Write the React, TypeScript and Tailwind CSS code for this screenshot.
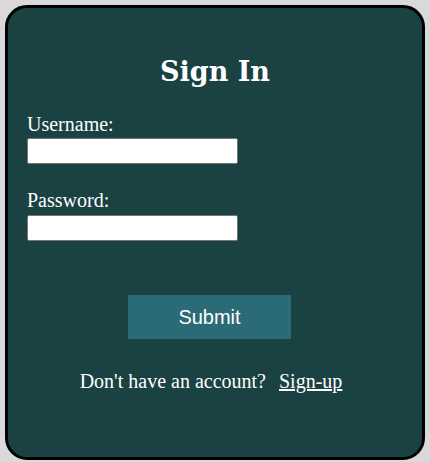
const App = () => {
  return (
    <div className="min-h-screen bg-[#d9d9d9] pt-[5px] px-[5px]">
      {/* Card */}
      <div className="h-[455px] w-[420px] rounded-[22px] border-[3px] border-black bg-[#1a4242] px-[19px] pt-[48px] text-white font-['Liberation_Serif',serif]">
        <h2 className="text-center text-[27px] leading-[32px] font-bold font-['DejaVu_Serif',serif]">
          Sign In
        </h2>

        <form className="mt-[25px] flex flex-col" onSubmit={(e) => e.preventDefault()}>
          <label className="text-[20px] leading-[23px]">Username:</label>
          <input
            type="text"
            className="mt-[2px] h-[26px] w-[211px] rounded-[2px] border border-[#767676] bg-white text-black"
          />

          <label className="mt-[25px] text-[20px] leading-[23px]">Password:</label>
          <input
            type="password"
            className="mt-[3px] h-[26px] w-[211px] rounded-[2px] border border-[#767676] bg-white text-black"
          />

          <div className="mt-[54px] flex justify-center pr-[11px]">
            <button
              type="submit"
              className="h-[44px] w-[163px] bg-[#2b6a77] text-[20px] text-white font-['Liberation_Sans',sans-serif]"
            >
              Submit
            </button>
          </div>
        </form>

        <div className="mt-[31px] flex justify-center pr-[8px] text-[20px] leading-[23px]">
          <span>Don't have an account?</span>
          <a href="#" className="ml-[13px] underline">
            Sign-up
          </a>
        </div>
      </div>
    </div>
  );
};

export default App;
